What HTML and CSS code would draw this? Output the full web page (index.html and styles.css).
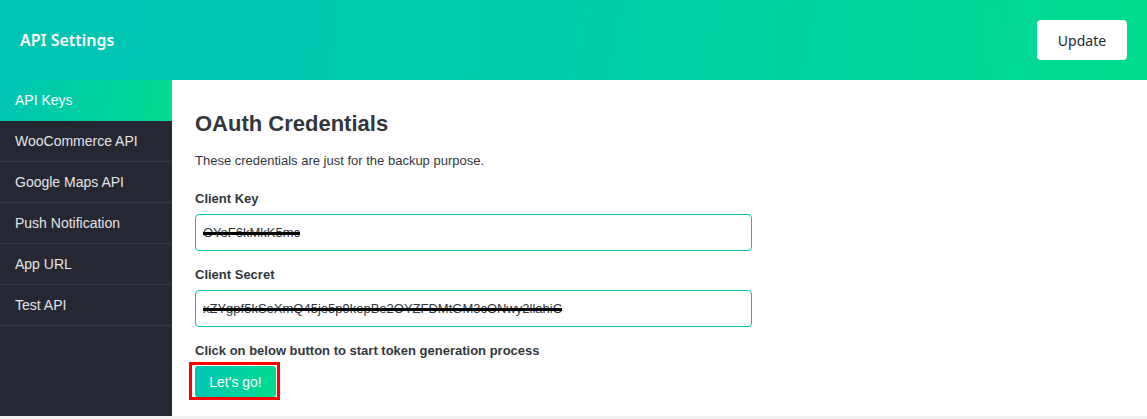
FILE: index.html
```html
<!DOCTYPE html>
<html lang="en">
<head>
<meta charset="utf-8">
<title>API Settings</title>
<link rel="stylesheet" href="styles.css">
</head>
<body>
<header class="topbar">
  <h1 class="topbar-title">API Settings</h1>
  <button class="update-btn" type="button">Update</button>
</header>
<div class="layout">
  <nav class="sidebar">
    <a class="nav-item active">API Keys</a>
    <a class="nav-item">WooCommerce API</a>
    <a class="nav-item">Google Maps API</a>
    <a class="nav-item">Push Notification</a>
    <a class="nav-item">App URL</a>
    <a class="nav-item">Test API</a>
  </nav>
  <main class="content">
    <h2 class="section-title">OAuth Credentials</h2>
    <p class="desc">These credentials are just for the backup purpose.</p>
    <label class="field-label">Client Key</label>
    <div class="field"><span class="redacted">OYoF6kMkK5mc</span></div>
    <label class="field-label">Client Secret</label>
    <div class="field"><span class="redacted">xZYgpf5kSeXmQ45je5p9kepBe2OYZFDMtGM3cONwy2llahiC</span></div>
    <p class="hint">Click on below button to start token generation process</p>
    <div class="highlight"><button class="go-btn" type="button">Let's go!</button></div>
  </main>
</div>
</body>
</html>
```
FILE: styles.css
```css
html, body {
  margin: 0;
  padding: 0;
}
body {
  background: #f0f0f1;
  font-family: "Liberation Sans", Arial, sans-serif;
  color: #32373c;
}
.topbar {
  height: 80px;
  box-sizing: border-box;
  padding: 0 20px;
  display: flex;
  align-items: center;
  justify-content: space-between;
  background: linear-gradient(100deg, #00c4b5 0%, #00cbac 45%, #00dc8d 100%);
}
.topbar-title {
  margin: 0;
  font-family: "Noto Sans", "Open Sans", sans-serif;
  font-weight: 600;
  font-size: 16px;
  color: #ffffff;
}
.update-btn {
  width: 90px;
  height: 40px;
  border: none;
  border-radius: 4px;
  background: #ffffff;
  font-family: "Noto Sans", "Open Sans", sans-serif;
  font-size: 14px;
  color: #23282d;
  padding: 0;
}
.layout {
  display: flex;
  height: 336px;
}
.sidebar {
  width: 172px;
  flex: none;
  background: #252833;
  display: flex;
  flex-direction: column;
}
.nav-item {
  display: flex;
  align-items: center;
  height: 40px;
  padding-left: 15px;
  border-bottom: 1px solid #363945;
  font-size: 14px;
  color: #e3e3e6;
}
.nav-item.active {
  background: linear-gradient(100deg, #00c4b5 0%, #00dc8d 100%);
  color: #ffffff;
  border-bottom-color: transparent;
}
.content {
  flex: 1;
  background: #ffffff;
  padding: 31px 0 0 23px;
  box-sizing: border-box;
}
.section-title {
  margin: 0;
  font-size: 22px;
  line-height: 26px;
  font-weight: 700;
  color: #32373c;
}
.desc {
  margin: 15px 0 0;
  font-size: 13px;
  line-height: 18px;
  color: #32373c;
}
.field-label {
  display: block;
  margin-top: 21px;
  font-size: 13px;
  line-height: 18px;
  font-weight: 700;
  color: #32373c;
}
.desc + .field-label {
  margin-top: 20px;
}
.field + .field-label {
  margin-top: 15px;
}
.field {
  margin-top: 6px;
  width: 557px;
  height: 37px;
  box-sizing: border-box;
  border: 1px solid #00c4b4;
  border-radius: 4px;
  display: flex;
  align-items: center;
  padding-left: 7px;
}
.redacted {
  font-size: 13px;
  color: #32373c;
  text-decoration: line-through;
  text-decoration-color: #000000;
  text-decoration-thickness: 3px;
}
.hint {
  margin: 15px 0 0;
  font-size: 13px;
  line-height: 18px;
  font-weight: 700;
  color: #32373c;
}
.highlight {
  display: inline-flex;
  margin: 2px 0 0 -6px;
  border: 3px solid #ff0000;
  padding: 1px 1px 0 3px;
}
.go-btn {
  width: 81px;
  height: 31px;
  border: none;
  border-radius: 3px;
  background: linear-gradient(100deg, #00c4b5 0%, #00dc8d 100%);
  color: #ffffff;
  font-family: "Liberation Sans", Arial, sans-serif;
  font-size: 14px;
  padding: 0;
}
```
